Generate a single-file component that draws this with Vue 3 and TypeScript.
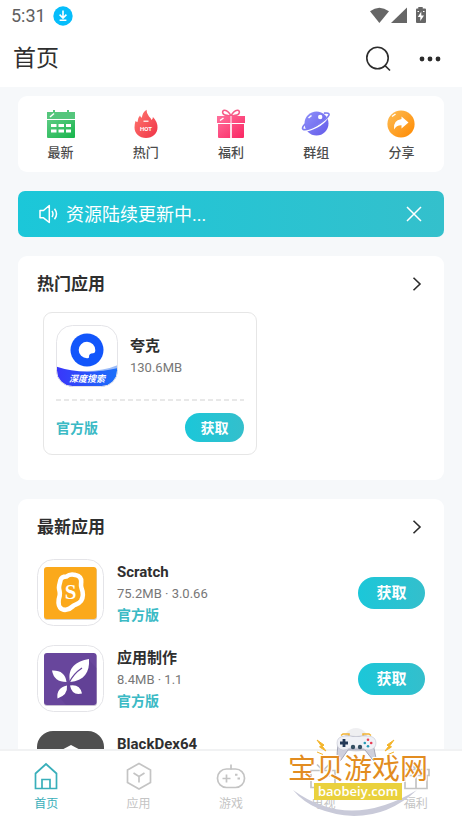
<script setup lang="ts">
import { ref } from 'vue'

interface AppItem {
  name: string
  meta: string
  icon: 'scratch' | 'maker' | 'dex'
}

const shortcuts = [
  { id: 'new', label: '最新' },
  { id: 'hot', label: '热门' },
  { id: 'gift', label: '福利' },
  { id: 'group', label: '群组' },
  { id: 'share', label: '分享' },
]

const latest: AppItem[] = [
  { name: 'Scratch', meta: '75.2MB · 3.0.66', icon: 'scratch' },
  { name: '应用制作', meta: '8.4MB · 1.1', icon: 'maker' },
  { name: 'BlackDex64', meta: '', icon: 'dex' },
]

const tabs = [
  { id: 'home', label: '首页' },
  { id: 'apps', label: '应用' },
  { id: 'games', label: '游戏' },
  { id: 'tv', label: '电视' },
  { id: 'gift', label: '福利' },
]

const activeTab = ref('home')
const noticeVisible = ref(true)
</script>

<template>
  <div class="shell">
    <header class="top">
      <div class="status">
        <span class="clock">5:31</span>
        <svg class="dl" viewBox="0 0 20 20"><circle cx="10" cy="10" r="9.7" fill="#06bdfb" /><path d="M10 4.6v7M6.6 8.6l3.4 3.4 3.4-3.4M6.6 14.3h6.8" fill="none" stroke="#fff" stroke-width="1.6" /></svg>
        <svg class="signals" viewBox="0 0 60 20">
          <path d="M1 4.200Q10.300-2.800 20 4.200L10.400 16z" fill="#666" />
          <path d="M38 .5V16H22z" fill="#666" />
          <path d="M49.300 0h4.400v1.500h2.300q1 0 1 1v12.500q0 1-1 1h-8q-1 0-1-1V2.500q0-1 1-1h1.300z" fill="#666" />
          <path d="M52.300 4.500l-3.500 5.600h2.500V14l3.700-5.500h-2.700z" fill="#fff" />
          <path d="M48.500 4.500h1.500M54 4.500h1.500" stroke="#fff" stroke-width="1.200" />
        </svg>
      </div>
      <div class="bar">
        <h1>首页</h1>
        <button class="plain" aria-label="搜索">
          <svg width="26" height="26" viewBox="0 0 26 26" fill="none" stroke="#2c2c2c" stroke-width="1.600"><circle cx="12.500" cy="12" r="10.700" /><path d="M19.500 19.200l5.500 5.300" /></svg>
        </button>
        <button class="plain" aria-label="更多">
          <svg width="22" height="26" viewBox="0 0 22 26" fill="#2c2c2c"><circle cx="3" cy="13" r="2.400" /><circle cx="11" cy="13" r="2.400" /><circle cx="19" cy="13" r="2.400" /></svg>
        </button>
      </div>
    </header>

    <main class="content">
      <nav class="card shortcuts" aria-label="快捷入口">
        <a v-for="s in shortcuts" :key="s.id" href="#" class="shortcut">
          <svg v-if="s.id === 'new'" width="30" height="30" viewBox="0 0 30 30">
            <defs><linearGradient id="gGreen" x1="0" y1="0" x2="1" y2="1"><stop offset="0" stop-color="#5bcb83" /><stop offset="1" stop-color="#17b54b" /></linearGradient></defs>
            <path d="M1 3h6V1h2v2h12V1h2v2h6v7H1z" fill="#54c67c" />
            <path d="M1 11h28v17q0 1-1 1H2q-1 0-1-1z" fill="url(#gGreen)" />
            <path d="M4 8l4-3.500" stroke="#fff" stroke-width="1.500" />
            <path d="M5 16.500h5.500M12.500 16.500H18M20 16.500h5M5 22h5.500M12.500 22H18M20 22h5" stroke="#fff" stroke-width="2.800" />
          </svg>
          <svg v-else-if="s.id === 'hot'" width="30" height="30" viewBox="0 0 30 30">
            <defs><linearGradient id="gRed" x1="0" y1="0" x2="1" y2="1"><stop offset="0" stop-color="#ff7970" /><stop offset="1" stop-color="#ef3346" /></linearGradient></defs>
            <path d="M4.500 12q1 1 2 1Q6.500 9 9 6.500q.6 1.700 1.800 2.300Q11.500 3.500 15.500 .8q0 4 2.500 6.700Q20 9 20.500 11q1.500-.8 1.400-3Q26.500 12.500 26.500 18.500C26.500 24.500 21.500 29 15 29S3.500 24.500 3.500 18.500q0-3.500 1-6.500z" fill="url(#gRed)" />
            <path d="M12.500 12.200h5" stroke="#fff" stroke-width="1.200" />
            <text x="15" y="21.500" text-anchor="middle" class="hot-text">HOT</text>
          </svg>
          <svg v-else-if="s.id === 'gift'" width="30" height="30" viewBox="0 0 30 30">
            <defs><linearGradient id="gPink" x1="0" y1="0" x2="1" y2="1"><stop offset="0" stop-color="#ff719d" /><stop offset="1" stop-color="#fa2461" /></linearGradient></defs>
            <path d="M15 7C11-1 5 .5 7 4.500 8.500 7 13 6.500 15 7zM15 7c4-8 10-6.500 8-2.500C21.500 7 17 6.500 15 7z" fill="none" stroke="#f75b89" stroke-width="1.600" />
            <path d="M1 7h28v7H1zM2 15h12.200v14H3q-1 0-1-1zM15.800 15H28v13q0 1-1 1H15.800z" fill="url(#gPink)" />
            <path d="M15 7v22" stroke="#ffe0ea" stroke-width="1.200" /><path d="M4 11.500L7.500 9" stroke="#fff" stroke-width="1.500" />
          </svg>
          <svg v-else-if="s.id === 'group'" width="30" height="30" viewBox="0 0 30 30">
            <defs><linearGradient id="gBlue" x1="0" y1="0" x2="1" y2="1"><stop offset="0" stop-color="#8f91fa" /><stop offset="1" stop-color="#635ae9" /></linearGradient></defs>
            <circle cx="15.500" cy="14.500" r="12" fill="url(#gBlue)" />
            <path d="M3 21.500C10 22 22 16 26.500 8.500" fill="none" stroke="#fff" stroke-width="1.700" />
            <path d="M4 15Q.5 18.500 2 20.200C6 22.500 25 12.500 28 6q.5-2.700-5-1.800" fill="none" stroke="#7c7cf0" stroke-width="1.700" />
            <circle cx="19.200" cy="8" r="2.200" fill="#fff" /><path d="M7.500 9l3-2.500" stroke="#fff" stroke-width="1.500" />
          </svg>
          <svg v-else width="30" height="30" viewBox="0 0 30 30">
            <defs><linearGradient id="gOrange" x1="0" y1="0" x2="1" y2="1"><stop offset="0" stop-color="#fdbd55" /><stop offset="1" stop-color="#ff8900" /></linearGradient></defs>
            <circle cx="15" cy="15" r="13.600" fill="url(#gOrange)" />
            <path d="M8 20.500q-1.500-9 7.500-10.500V7.500l7 6-7 6v-3.300Q10.500 16 8 20.500z" fill="#fff" /><path d="M6 7.500L9.500 5" stroke="#fff" stroke-width="1.500" />
          </svg>
          <span>{{ s.label }}</span>
        </a>
      </nav>

      <section v-if="noticeVisible" class="notice">
        <svg width="22" height="22" viewBox="0 0 22 22" fill="none" stroke="#fff" stroke-width="1.500"><path d="M3 7.500h3.500L12.300 2.500v17L6.500 14.800H3z" stroke-linejoin="round" /><path d="M15 8q2 3 0 6M17.500 5.800q4 5.200 0 10.400" /></svg>
        <p>资源陆续更新中...</p>
        <button class="plain" aria-label="关闭" @click="noticeVisible = false">
          <svg width="16" height="16" viewBox="0 0 16 16" stroke="#fff" stroke-width="1.500"><path d="M1 1l14 14M15 1L1 15" /></svg>
        </button>
      </section>

      <section class="card section">
        <div class="heading">
          <h2>热门应用</h2>
          <a href="#" aria-label="更多热门应用"><svg width="10" height="14" viewBox="0 0 10 14" fill="none" stroke="#2c2c2c" stroke-width="1.600"><path d="M1.500 .7L8 7l-6.500 6.300" /></svg></a>
        </div>
        <article class="featured">
          <div class="feature-top">
            <svg class="quark" width="62" height="62" viewBox="0 0 62 62">
              <defs>
                <linearGradient id="gQ"><stop offset="0" stop-color="#3a35fa" /><stop offset="1" stop-color="#1a71fa" /></linearGradient>
                <clipPath id="cQ"><rect x="0.500" y="0.500" width="61" height="61" rx="16" /></clipPath>
              </defs>
              <rect x="0.500" y="0.500" width="61" height="61" rx="16" fill="#fff" />
              <g clip-path="url(#cQ)"><path d="M28 46Q48 46 62 40v6z" fill="#9cbcf8" /><path d="M0 41.500q15 5 31 5 17 0 31-3.500v20H0z" fill="url(#gQ)" /></g>
              <rect x="0.500" y="0.500" width="61" height="61" rx="16" fill="none" stroke="#e4e4e8" />
              <circle cx="31" cy="25" r="16.500" fill="#1256fb" />
              <path d="M31 16.700a8.300 8.300 0 0 1 8.300 8.500q0 3-2.300 3-4.300 0-4 4 0 1.300-2 1.100a8.300 8.300 0 0 1 0-16.600z" fill="#fff" />
              <text x="31" y="57" text-anchor="middle" class="quark-text">深度搜索</text>
            </svg>
            <div>
              <h3>夸克</h3>
              <p class="meta">130.6MB</p>
            </div>
          </div>
          <svg class="dash" width="100%" height="2"><line x1="0" y1="1" x2="100%" y2="1" stroke="#e8e8e8" stroke-width="2" stroke-dasharray="5 3" /></svg>
          <div class="feature-bottom">
            <span class="official">官方版</span>
            <button class="get small">获取</button>
          </div>
        </article>
      </section>

      <section class="card section">
        <div class="heading">
          <h2>最新应用</h2>
          <a href="#" aria-label="更多最新应用"><svg width="10" height="14" viewBox="0 0 10 14" fill="none" stroke="#2c2c2c" stroke-width="1.600"><path d="M1.500 .7L8 7l-6.500 6.300" /></svg></a>
        </div>
        <ul class="list">
          <li v-for="app in latest" :key="app.name">
            <svg width="67" height="67" viewBox="0 0 67 67">
              <template v-if="app.icon === 'scratch'">
                <rect x="0.500" y="0.500" width="66" height="66" rx="16" fill="#fff" stroke="#e4e4e8" />
                <rect x="7" y="9" width="53" height="52" rx="3" fill="#d8d3ca" />
                <rect x="7" y="8" width="52.500" height="52" rx="3" fill="#fba91b" />
                <path d="M23.500 21c.8-3 3-3.500 6-3.500 3-2.500 6-2.300 9-1.500 4 .8 6 3 5.700 7 0 2-.7 3.500.3 6 2 5 2 9-.5 13-2.500 3.500-6 3-8.500 5.500-4 4-9.500 4.500-12.500 1-2.500-3.500-1.500-8-.3-12 .8-3-.7-5-.7-8 0-3 1-4.500 1.500-7.500z" fill="none" stroke="#fff" stroke-width="4.600" stroke-linejoin="round" />
                <text x="33.500" y="40" text-anchor="middle" class="scratch-text">S</text>
              </template>
              <template v-else-if="app.icon === 'maker'">
                <rect x="0.500" y="0.500" width="66" height="66" rx="16" fill="#fff" stroke="#e4e4e8" />
                <rect x="7" y="9" width="53" height="52" rx="3" fill="#c8c0d1" />
                <rect x="7" y="8" width="52.500" height="52" rx="3" fill="#68469c" />
                <path d="M33 36L52 15l7.500 8v34q0 3-3 3H29l-7-8z" fill="#553887" opacity=".3" />
                <path d="M33 37C30 23 39 16 52 14C53 27 47 36 33 37z" fill="#fff" />
                <path d="M32 38Q36 29 45 23" fill="none" stroke="#68469c" stroke-width="1.300" />
                <path d="M29.500 37Q17 37 15 25.500Q28 25 29.500 37zM30 40.500Q31 50 20.500 53.500Q19 43 30 40.500zM33 40.500Q43 39 45 48.500Q35 51 33 40.500z" fill="#fff" />
              </template>
              <template v-else>
                <rect width="67" height="67" rx="16" fill="#4f4f4f" />
                <path d="M34 14l17 9v20L34 53 17 43V23z" fill="#fff" />
              </template>
            </svg>
            <div class="info">
              <h3>{{ app.name }}</h3>
              <p class="meta">{{ app.meta }}</p>
              <span class="official">官方版</span>
            </div>
            <button class="get">获取</button>
          </li>
        </ul>
      </section>
    </main>

    <nav class="tabs" aria-label="主导航">
      <button v-for="t in tabs" :key="t.id" class="tab" :class="{ active: activeTab === t.id }" @click="activeTab = t.id">
        <svg width="30" height="30" viewBox="0 0 30 30" fill="none" stroke="currentColor" stroke-width="1.700">
          <path v-if="t.id === 'home'" d="M4.500 11.500L15 2l10.500 9.500V26.500H4.500zM11 26V17.500h8V26" />
          <path v-else-if="t.id === 'apps'" d="M15 1.500l11.500 6.500v12.500L15 27 3.500 20.500V8zM9.500 11L15 14.500l5.500-3.500M15 14.500v6" />
          <template v-else-if="t.id === 'games'">
            <rect x="1.500" y="7" width="27" height="18.500" rx="9" />
            <path d="M15 2.500v5M6.500 16.500h8M10.500 12.500v8" /><path d="M19 12.800h2.500M21.500 16.500h2.500" stroke-width="2" />
          </template>
          <path v-else-if="t.id === 'tv'" d="M3 8.500h24v17H3zM9 2.500l6 6 6-6M18 14h4M10 18h3" />
          <path v-else d="M2 7.500h26v6H2zM4 13.500h22v13H4zM15 7.500v19M15 7L10 2.500M15 7l5-4.500" />
        </svg>
        <span>{{ t.label }}</span>
      </button>
    </nav>

    <div class="badge">
      <svg width="144" height="90" viewBox="0 0 144 90">
        <circle cx="70" cy="13" r="12" fill="#ededf0" opacity=".9" />
        <path d="M7 63q56 41 124 0Q103 89 68 89 27 87 7 63z" fill="#c9cad9" />
        <path d="M54 11q3-2 8-2l8 1 8-1q6 0 8 3l4 19q-1 5-4 1l-7-9H62l-7 10q-4 4-4-1 0-14 3-21z" fill="#cfd0dd" stroke="#8b8d9f" stroke-width=".7" />
        <path d="M58 9h6q6 1 12 0h7q7 1 7 7t-7 7q-4 0-7-2H64q-3 2-7 2-6-1-6-7t7-7z" fill="#f0f1f6" stroke="#b9bac8" stroke-width=".5" />
        <path d="M58 12v8M54 16h8" stroke="#243957" stroke-width="2.800" />
        <g fill="#e73c55"><circle cx="82" cy="12.800" r="1.300" /><circle cx="85.200" cy="16" r="1.300" /></g>
        <g fill="#2699b5"><circle cx="78.800" cy="16" r="1.300" /><circle cx="82" cy="19.200" r="1.300" /></g>
        <g fill="#344e62"><circle cx="67" cy="20" r="2.200" /><circle cx="74" cy="20" r="2.200" /></g>
        <path d="M55 8.500l2-1.500h6v1.500M77 8.500V7h6l2 1.500" fill="none" stroke="#f2b333" stroke-width="1.500" />
        <path d="M31 13l7 5-1.500 1.500L40 24l-6.500-4 1.500-1.500zM108 13l-7 5 1.500 1.500L99 24l6.500-4-1.500-1.500zM31 25l6 2.500M108 25l-6 2.500" fill="#f4b52b" stroke="#f4b52b" />
      </svg>
      <strong>宝贝游戏网</strong>
      <em>baobeiy.com</em>
    </div>
  </div>
</template>

<style>
body {
  margin: 0;
  background: #f6f8fa;
}
</style>

<style scoped>
.shell {
  position: relative;
  display: flex;
  flex-direction: column;
  height: 100vh;
  overflow: hidden;
  background: #f6f8fa;
  color: #2f2f2f;
  font-family: Roboto, "Noto Sans CJK SC", sans-serif;
}
h1, h2, h3, p, ul {
  margin: 0;
  padding: 0;
}
a {
  color: inherit;
  text-decoration: none;
}
svg {
  display: block;
  flex: none;
}
button {
  border: 0;
  padding: 0;
  font-family: inherit;
  cursor: pointer;
}
.plain {
  display: block;
  background: none;
}
.top {
  flex: none;
  background: #fff;
}
.status {
  display: flex;
  align-items: center;
  height: 31px;
  padding: 0 33px 0 11px;
}
.clock {
  color: #606060;
  font-size: 18px;
}
.dl {
  width: 20px;
  height: 20px;
  margin-left: 7px;
}
.signals {
  width: 60px;
  height: 20px;
  margin-left: auto;
  margin-top: 2px;
}
.bar {
  display: flex;
  align-items: center;
  gap: 28px;
  height: 56px;
  padding: 0 21px 0 13px;
  box-sizing: border-box;
}
h1 {
  flex: 1;
  font-size: 23px;
  line-height: 32px;
  font-weight: 400;
}
.content {
  flex: 1;
  min-height: 0;
  overflow: hidden;
  display: flex;
  flex-direction: column;
  gap: 19px;
  padding: 9px 18px 0;
}
.content > * {
  flex: none;
}
.card {
  background: #fff;
  border-radius: 9px;
}
.shortcuts {
  display: grid;
  grid-template-columns: repeat(5, 1fr);
  padding: 13px 0 10px;
}
.shortcut {
  display: flex;
  flex-direction: column;
  align-items: center;
  gap: 4px;
  font-size: 13px;
  line-height: 19px;
  font-weight: 500;
  color: #4c4c4c;
}
.hot-text {
  font: 700 6px Roboto, sans-serif;
  fill: #fff;
}
.notice {
  display: flex;
  align-items: center;
  height: 46px;
  padding: 0 22px 0 19px;
  border-radius: 7px;
  background: linear-gradient(90deg, #1bc7d9, #34c0cc);
  color: #fff;
}
.notice p {
  flex: 1;
  margin-left: 7px;
  padding-bottom: 2px;
  font-size: 18px;
}
.section {
  padding: 15px 19px 25px;
}
.heading {
  display: flex;
  align-items: center;
  justify-content: space-between;
  padding-right: 3px;
  line-height: 26px;
}
h2 {
  font-size: 17px;
  font-weight: 700;
}
.featured {
  width: 50%;
  min-width: 214px;
  box-sizing: border-box;
  margin: 15px 0 0 6px;
  padding: 12px;
  border: 1px solid #e6e6e6;
  border-radius: 9px;
}
.feature-top {
  display: flex;
  gap: 12px;
}
h3 {
  font-size: 15px;
  line-height: 22px;
  font-weight: 700;
}
.feature-top h3 {
  margin-top: 10px;
}
.meta {
  font-size: 13px;
  line-height: 22px;
  color: #777;
}
.quark-text {
  font: italic 700 9px "Noto Sans CJK SC", sans-serif;
  fill: #fff;
}
.dash {
  margin: 12px 0;
}
.feature-bottom {
  display: flex;
  align-items: center;
  justify-content: space-between;
}
.official {
  color: #3bbac5;
  font-size: 14px;
  line-height: 20px;
  font-weight: 700;
}
.get {
  width: 67px;
  height: 32px;
  padding-bottom: 2px;
  border-radius: 16px;
  background: linear-gradient(90deg, #1bc7d9, #34bfcc);
  color: #fff;
  font-size: 15px;
  font-weight: 700;
}
.get.small {
  width: 59px;
  height: 29px;
  font-size: 14px;
}
.list {
  display: flex;
  flex-direction: column;
  gap: 19px;
  margin-top: 19px;
  list-style: none;
}
.list li {
  display: flex;
  align-items: center;
  gap: 13px;
}
.info {
  flex: 1;
}
.info .meta {
  min-height: 22px;
}
.info .official {
  display: block;
}
.scratch-text {
  font: 700 21px "Liberation Serif", serif;
  fill: #fff;
}
.tabs {
  flex: none;
  display: grid;
  grid-template-columns: repeat(5, 1fr);
  padding: 11px 0 8px;
  background: #fff;
  border-top: 2px solid #f1f2f3;
}
.tab {
  display: flex;
  flex-direction: column;
  align-items: center;
  gap: 3px;
  background: none;
  color: #c4c4c4;
  font-size: 12px;
  line-height: 18px;
}
.tab.active {
  color: #39afba;
}
.badge {
  position: absolute;
  right: 32px;
  bottom: 4px;
  display: grid;
  width: 144px;
  height: 90px;
  pointer-events: none;
}
.badge > * {
  grid-area: 1 / 1;
}
.badge strong {
  align-self: start;
  justify-self: center;
  margin-top: 24px;
  font-size: 28px;
  line-height: 38px;
  font-weight: 400;
  color: #e28c20;
  white-space: nowrap;
  text-shadow: 0 0 2px #fff, 1px 1px 0 #fff, -1px -1px 0 #fff;
}
.badge em {
  align-self: start;
  justify-self: center;
  margin-top: 56px;
  padding: 0 4px;
  background: #ead13d;
  color: #fff;
  font: 600 13px "Open Sans", sans-serif;
  line-height: 17px;
}
</style>
